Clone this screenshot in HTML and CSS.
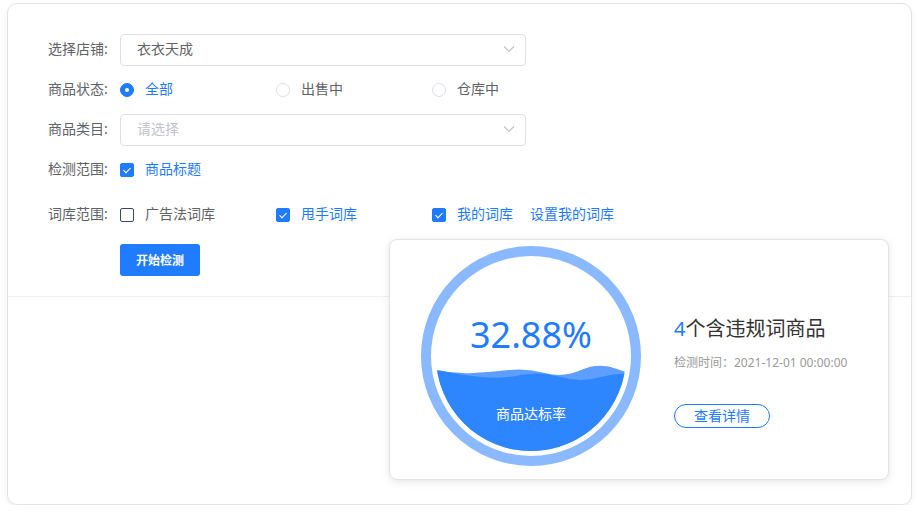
FILE: index.html
```html
<!DOCTYPE html>
<html lang="zh-CN">
<head>
    <meta charset="UTF-8">
    <meta name="viewport" content="width=device-width, initial-scale=1.0">
    <title>违规词检测</title>
    <link rel="stylesheet" href="styles.css">
</head>
<body>
    <div class="panel">
        <form class="check-form" onsubmit="event.preventDefault();">
            <div class="form-row">
                <label class="form-label">选择店铺:</label>
                <div class="select">
                    <span>衣衣天成</span>
                    <svg class="arrow" width="12" height="8" viewBox="0 0 12 8"><path d="M1 1.5l5 5 5-5" fill="none" stroke="#c0c4cc" stroke-width="1.2"/></svg>
                </div>
            </div>

            <div class="form-row">
                <label class="form-label">商品状态:</label>
                <div class="options">
                    <span class="option active"><i class="radio on"></i>全部</span>
                    <span class="option"><i class="radio"></i>出售中</span>
                    <span class="option"><i class="radio"></i>仓库中</span>
                </div>
            </div>

            <div class="form-row">
                <label class="form-label">商品类目:</label>
                <div class="select">
                    <span class="placeholder">请选择</span>
                    <svg class="arrow" width="12" height="8" viewBox="0 0 12 8"><path d="M1 1.5l5 5 5-5" fill="none" stroke="#c0c4cc" stroke-width="1.2"/></svg>
                </div>
            </div>

            <div class="form-row wide">
                <label class="form-label">检测范围:</label>
                <div class="options">
                    <span class="option active"><i class="check on"></i>商品标题</span>
                </div>
            </div>

            <div class="form-row wide">
                <label class="form-label">词库范围:</label>
                <div class="options">
                    <span class="option"><i class="check"></i>广告法词库</span>
                    <span class="option active"><i class="check on"></i>甩手词库</span>
                    <span class="option active"><i class="check on"></i>我的词库<a class="link">设置我的词库</a></span>
                </div>
            </div>

            <div class="form-row">
                <span class="form-label"></span>
                <button type="submit" class="btn-primary">开始检测</button>
            </div>
        </form>

        <div class="result-card">
            <div class="gauge">
                <svg width="220" height="222" viewBox="0 0 220 222">
                    <defs>
                        <clipPath id="water">
                            <circle cx="110" cy="111" r="95"/>
                        </clipPath>
                    </defs>
                    <circle cx="110" cy="111" r="105" fill="#fff" stroke="#8ab9ff" stroke-width="10"/>
                    <g clip-path="url(#water)">
                        <path d="M-20 128 Q -2 121 16 125 T 52 128 T 88 125 T 124 128 T 160 125 T 196 124 T 232 125 V 230 H -20 Z" fill="#5d9eff"/>
                        <path d="M-20 127 Q 0 122 20 126 T 60 132 T 100 130 T 140 132 T 180 132 T 220 130 T 260 131 V 230 H -20 Z" fill="#2e86ff"/>
                    </g>
                </svg>
                <div class="gauge-value">32.88%</div>
                <div class="gauge-label">商品达标率</div>
            </div>
            <div class="result-info">
                <h3><span class="count">4</span>个含违规词商品</h3>
                <p class="time">检测时间：2021-12-01 00:00:00</p>
                <button class="btn-outline">查看详情</button>
            </div>
        </div>
    </div>
</body>
</html>
```

FILE: styles.css
```css
body {
    font-family: "Noto Sans", "Noto Sans CJK SC", sans-serif;
    background-color: #fff;
    margin: 0;
    padding: 3px 9px 0 7px;
}

.panel {
    position: relative;
    height: 502px;
    background-color: #fff;
    border: 1px solid #e3e3e3;
    border-radius: 10px;
    box-shadow: 0 2px 6px rgba(0, 0, 0, 0.06);
    box-sizing: border-box;
}

.check-form {
    padding: 30px 0 20px 40px;
    border-bottom: 1px solid #f0f0f0;
}

.form-row {
    display: flex;
    align-items: center;
    height: 32px;
    margin-bottom: 8px;
    font-size: 14px;
    line-height: 20px;
    color: #606266;
}

.form-row.wide {
    margin-bottom: 13px;
}

.form-row:last-child {
    margin-bottom: 0;
}

.form-label {
    width: 72px;
    flex-shrink: 0;
    margin-top: -2px;
}

.select {
    width: 406px;
    height: 32px;
    box-sizing: border-box;
    border: 1px solid #dcdfe6;
    border-radius: 4px;
    display: flex;
    align-items: center;
    justify-content: space-between;
    padding: 0 10px 2px 16px;
    color: #606266;
}

.select .placeholder {
    color: #c0c4cc;
}

.options {
    display: flex;
}

.option {
    width: 156px;
    display: flex;
    align-items: center;
    white-space: nowrap;
    margin-top: -2px;
}

.option:last-child {
    width: auto;
}

.option.active {
    color: #1f7bff;
}

.radio, .check {
    width: 14px;
    height: 14px;
    flex-shrink: 0;
    box-sizing: border-box;
    margin: 2px 11px 0 0;
    position: relative;
}

.radio {
    border: 1px solid #dcdfe6;
    border-radius: 50%;
}

.radio.on {
    background-color: #1f7bff;
    border-color: #1f7bff;
}

.radio.on::after {
    content: "";
    position: absolute;
    left: 4px;
    top: 4px;
    width: 4px;
    height: 4px;
    border-radius: 50%;
    background-color: #fff;
}

.check {
    border: 1px solid #3b4a6b;
    border-radius: 2px;
}

.check.on {
    background-color: #1f7bff;
    border-color: #1f7bff;
}

.check.on::after {
    content: "";
    position: absolute;
    left: 4px;
    top: 1.5px;
    width: 3px;
    height: 6px;
    border: solid #fff;
    border-width: 0 1px 1px 0;
    transform: rotate(45deg);
}

.link {
    margin-left: 17px;
    color: #1f7bff;
    cursor: pointer;
}

.btn-primary {
    width: 80px;
    height: 32px;
    border: none;
    border-radius: 3px;
    background-color: #1f7bff;
    color: #fff;
    font-family: inherit;
    font-size: 12px;
    font-weight: bold;
    cursor: pointer;
}

.result-card {
    position: absolute;
    left: 381px;
    top: 235px;
    width: 500px;
    height: 241px;
    box-sizing: border-box;
    background-color: #fff;
    border: 1px solid #e3e3e3;
    border-radius: 8px;
    box-shadow: 0 2px 8px rgba(0, 0, 0, 0.1);
    display: flex;
    align-items: flex-start;
    padding: 5px 0 0 31px;
}

.gauge {
    position: relative;
    width: 220px;
    height: 222px;
}

.gauge svg {
    display: block;
}

.gauge-value {
    position: absolute;
    left: 0;
    right: 0;
    top: 68px;
    text-align: center;
    font-size: 36px;
    color: #1f7bff;
    line-height: 44px;
}

.gauge-label {
    position: absolute;
    left: 0;
    right: 0;
    top: 158px;
    text-align: center;
    font-size: 14px;
    color: #fff;
}

.result-info {
    margin-left: 33px;
    margin-top: 70px;
}

.result-info h3 {
    margin: 0;
    font-size: 20px;
    font-weight: normal;
    color: #333;
    line-height: 28px;
}

.result-info .count {
    color: #1f7bff;
}

.time {
    margin: 11px 0 32px;
    font-size: 12px;
    line-height: 18px;
    color: #999;
}

.btn-outline {
    width: 96px;
    height: 24px;
    border: 1px solid #1f7bff;
    border-radius: 12px;
    background-color: #fff;
    color: #1f7bff;
    font-family: inherit;
    font-size: 14px;
    line-height: 20px;
    padding: 0;
    cursor: pointer;
}
```
